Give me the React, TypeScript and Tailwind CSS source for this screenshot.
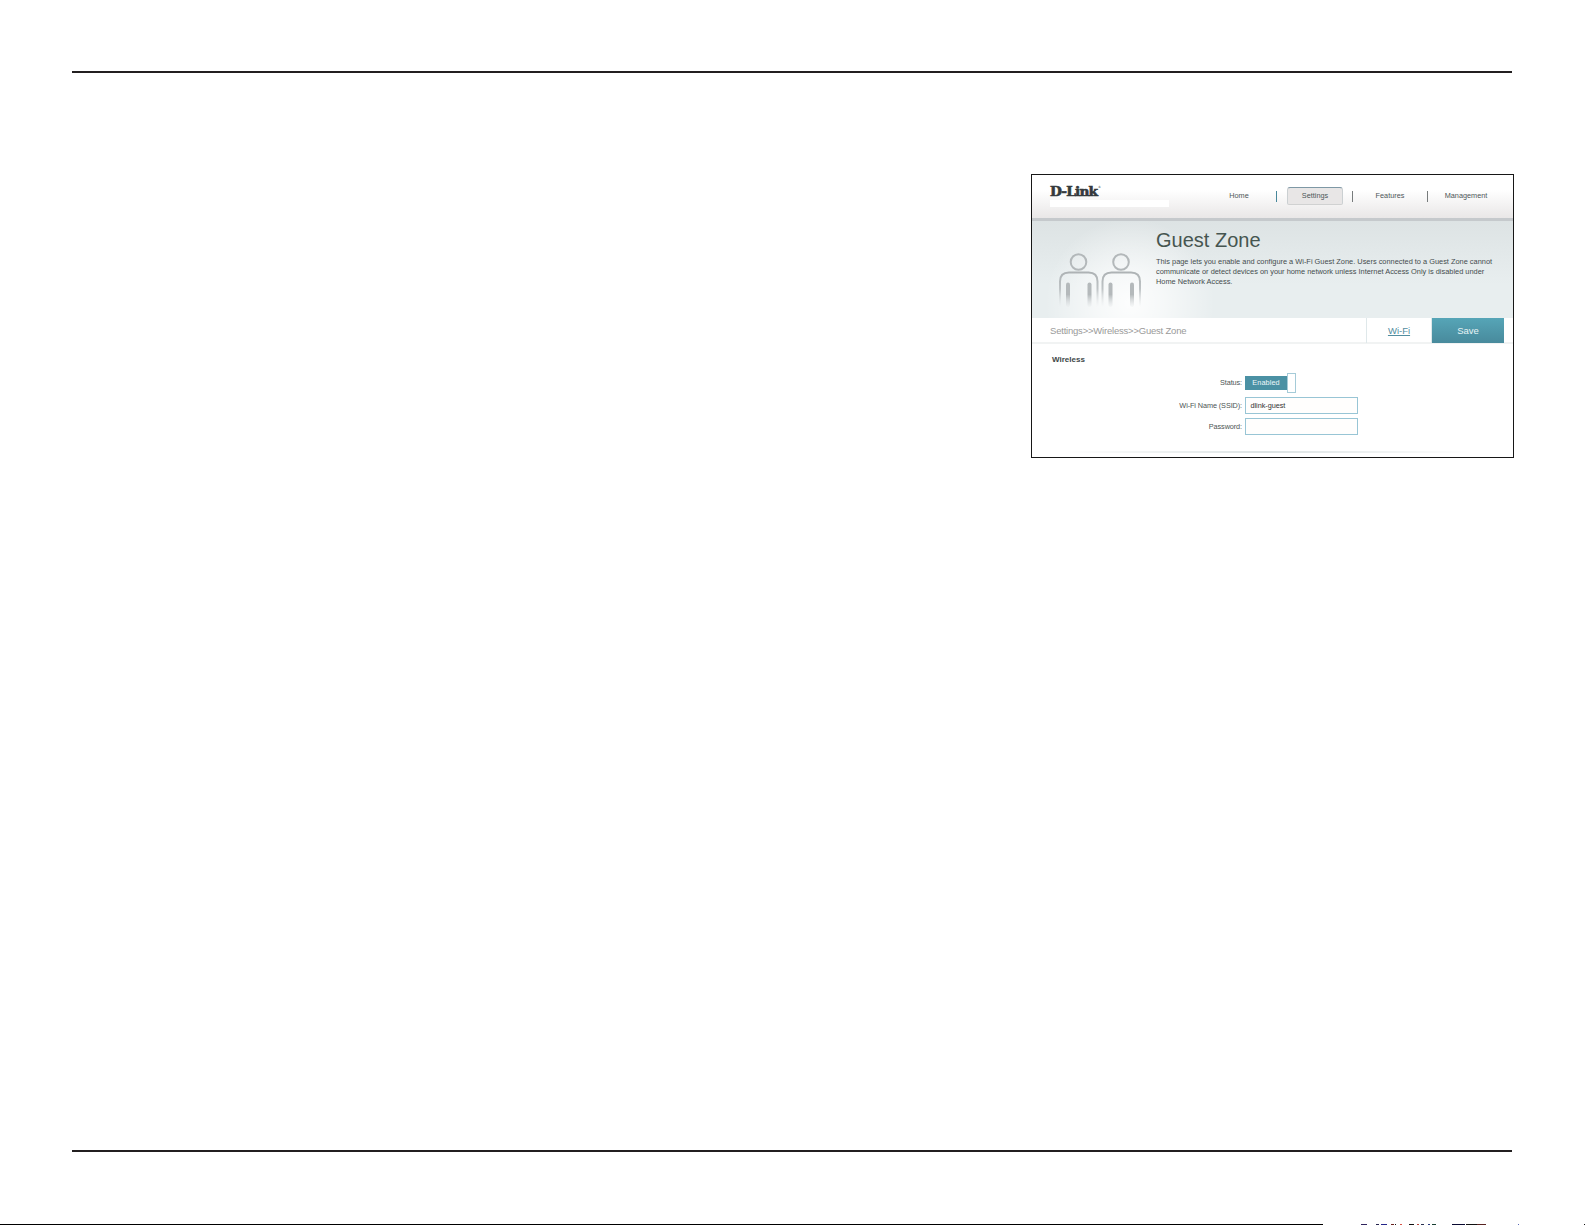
const nav = "text-center text-[7.3px] leading-[10px] text-[#4d5658]";
const label = "w-[210px] shrink-0 text-right text-[7.3px] leading-[10px] tracking-[-0.1px] text-[#4d5554]";

function Person({ x }: { x: number }) {
  return (
    <g transform={`translate(${x} 0)`} fill="none">
      <circle cx="19.5" cy="9" r="7.8" stroke="#b3b8ba" strokeWidth="2" />
      <path d="M1 54V28.5Q1 19.5 10 19.5H29.500Q38.500 19.500 38.500 28.500V54" stroke="url(#outline)" strokeWidth="2" />
      <rect x="7" y="29.500" width="4" height="24.500" rx="2" fill="url(#arm)" />
      <rect x="28.500" y="29.500" width="4" height="24.500" rx="2" fill="url(#arm)" />
    </g>
  );
}

function People() {
  return (
    <svg className="mt-[32px] ml-[27px] block shrink-0" width="83" height="56" viewBox="0 0 83 56">
      <defs>
        <linearGradient id="outline" gradientUnits="userSpaceOnUse" x1="0" y1="18" x2="0" y2="54">
          <stop offset="0" stopColor="#acb1b3" />
          <stop offset=".5" stopColor="#bfc4c6" />
          <stop offset="1" stopColor="#dfe3e5" stopOpacity="0" />
        </linearGradient>
        <linearGradient id="arm" gradientUnits="userSpaceOnUse" x1="0" y1="27" x2="0" y2="56">
          <stop offset="0" stopColor="#b4b9bb" />
          <stop offset=".5" stopColor="#b4b9bb" />
          <stop offset="1" stopColor="#dfe3e5" stopOpacity="0" />
        </linearGradient>
      </defs>
      <Person x={0} />
      <Person x={42.5} />
    </svg>
  );
}

function Header() {
  return (
    <header className="flex h-[43px] shrink-0 bg-linear-to-b from-white from-35% to-[#e9e7e7]">
      <div className="ml-[18px] w-[119px] shrink-0 pt-[9px]">
        <div className="flex h-[16px] whitespace-nowrap font-['DejaVu_Serif'] text-[#34393c]">
          <span className="w-[48px] origin-left scale-x-[1.14] text-[12px] leading-[16px] font-bold tracking-[-0.7px] [-webkit-text-stroke:0.6px_#34393c]">
            D-Link
          </span>
          <span className="text-[3px] leading-[6px]">®</span>
        </div>
        <div className="h-[7px] bg-white" />
      </div>
      <div className="flex h-[42px] items-center">
        <div className={`${nav} ml-[46px] w-[48px]`}>Home</div>
        <div className="ml-[13px] h-[11px] w-px bg-[#47879b]" />
        <div className="ml-[10px] flex h-[18px] w-[56px] items-center justify-center rounded-t-[3px] rounded-b-[2px] border border-t-[#7e98a5] border-r-[#cbd0d2] border-b-[#d0d1d1] border-l-[#cbd0d2] bg-[#e8e6e6]">
          <span className={nav}>Settings</span>
        </div>
        <div className="ml-[9px] h-[11px] w-px bg-[#777b7c]" />
        <div className={`${nav} w-[74px]`}>Features</div>
        <div className="h-[11px] w-px bg-[#777b7c]" />
        <div className={`${nav} w-[76px]`}>Management</div>
      </div>
    </header>
  );
}

function Hero() {
  return (
    <section className="flex h-[100px] shrink-0 border-t-[3px] border-[#c5c9cc] bg-[radial-gradient(ellipse_85px_85px_at_98px_82px,#ffffffe6,#ffffff99_40%,#ffffff00),linear-gradient(to_bottom,#dde3e4,#e8eeef_65%,#e8eeef)]">
      <People />
      <div className="ml-[14px] pt-[7px]">
        <h1 className="h-[28.500px] whitespace-nowrap text-[20px] leading-[24px] text-[#465550]">Guest Zone</h1>
        <p className="whitespace-nowrap text-[7.400px] leading-[10.200px] text-[#444c4d]">
          This page lets you enable and configure a Wi-Fi Guest Zone. Users connected to a Guest Zone cannot
          <br />
          communicate or detect devices on your home network unless Internet Access Only is disabled under
          <br />
          Home Network Access.
        </p>
      </div>
    </section>
  );
}

function Toolbar() {
  return (
    <div className="flex h-[26px] shrink-0 border-b-2 border-[#f1f3f3]">
      <div className="w-[334px] shrink-0 pl-[18px] text-[9.500px] leading-[25px] tracking-[-0.210px] text-[#9a9a9a]">
        Settings&gt;&gt;Wireless&gt;&gt;Guest Zone
      </div>
      <a className="h-[25px] w-[66px] shrink-0 border-x border-[#dfe8ea] text-center text-[9.500px] leading-[26px] text-[#528d9f] underline decoration-1 underline-offset-1">
        Wi-Fi
      </a>
      <button className="h-[25px] w-[72px] shrink-0 bg-linear-to-b from-[#56a5b7] to-[#488a9c] text-[9.500px] leading-[25px] text-[#e8f4f6]">
        Save
      </button>
    </div>
  );
}

function WirelessForm() {
  return (
    <section className="flex flex-col">
      <h2 className="mt-[10px] ml-[20px] text-[8px] leading-[12px] font-bold text-[#3d4748]">Wireless</h2>
      <div className="mt-[7px] flex h-[20px] items-center">
        <span className={label}>Status:</span>
        <div className="ml-[3px] h-[14px] w-[42px] bg-[#4b91a4] text-center text-[7.300px] leading-[14px] tracking-[0.1px] text-[#eef7f9]">
          Enabled
        </div>
        <div className="h-[20px] w-[9px] border border-[#a5cbd8] bg-white" />
      </div>
      <div className="mt-[4px] flex h-[17px] items-center">
        <span className={label}>Wi-Fi Name (SSID):</span>
        <div className="ml-[3px] h-[17px] w-[113px] border border-[#98c5d5] bg-[#fffefd] pl-[4.500px] text-[7.300px] leading-[16px] tracking-[-0.050px] text-[#333434]">
          dlink-guest
        </div>
      </div>
      <div className="mt-[4px] flex h-[17px] items-center">
        <span className={label}>Password:</span>
        <div className="ml-[3px] h-[17px] w-[113px] border border-[#98c5d5] bg-[#fffefd]" />
      </div>
      <div className="mt-[16px] ml-[32px] h-[2px] w-[408px] bg-linear-to-r from-transparent via-[#dce3e4] to-transparent" />
    </section>
  );
}

const marks = [
  [61, 6, "#30245d"],
  [76, 3, "#24234d"],
  [81, 6, "#24268a"],
  [91, 3, "#6b221f"],
  [95, 1, "#111111"],
  [100, 2, "#d85549"],
  [109, 5, "#111111"],
  [117, 2, "#b8453c"],
  [121, 3, "#293050"],
  [128, 2, "#26357c"],
  [132, 4, "#173e31"],
  [152, 13, "#080830"],
  [166, 11, "#111111"],
  [177, 9, "#582321"],
  [218, 1, "#5869b5"],
  [284, 1, "#111111"],
] as const;

export default function App() {
  return (
    <main className="flex h-[1225px] w-[1585px] flex-col overflow-hidden bg-white font-['Liberation_Sans',sans-serif]">
      <div className="mt-[71px] ml-[72px] h-[2px] w-[1440px] shrink-0 bg-[#231f20]" />
      <article className="mt-[101px] ml-[1031px] flex h-[284px] w-[483px] shrink-0 flex-col overflow-hidden border border-[#171717] bg-white">
        <Header />
        <Hero />
        <Toolbar />
        <WirelessForm />
      </article>
      <div className="mt-[692px] ml-[72px] h-[2px] w-[1440px] shrink-0 bg-[#231f20]" />
      <div className="mt-[72px] flex h-px shrink-0">
        <div className="h-px w-[1323px] bg-black" />
        <svg className="h-px w-[262px]" viewBox="23 0 262 1" preserveAspectRatio="none">
          {marks.map(([x, width, color]) => (
            <rect key={x} x={x} width={width} height="1" fill={color} />
          ))}
        </svg>
      </div>
    </main>
  );
}
